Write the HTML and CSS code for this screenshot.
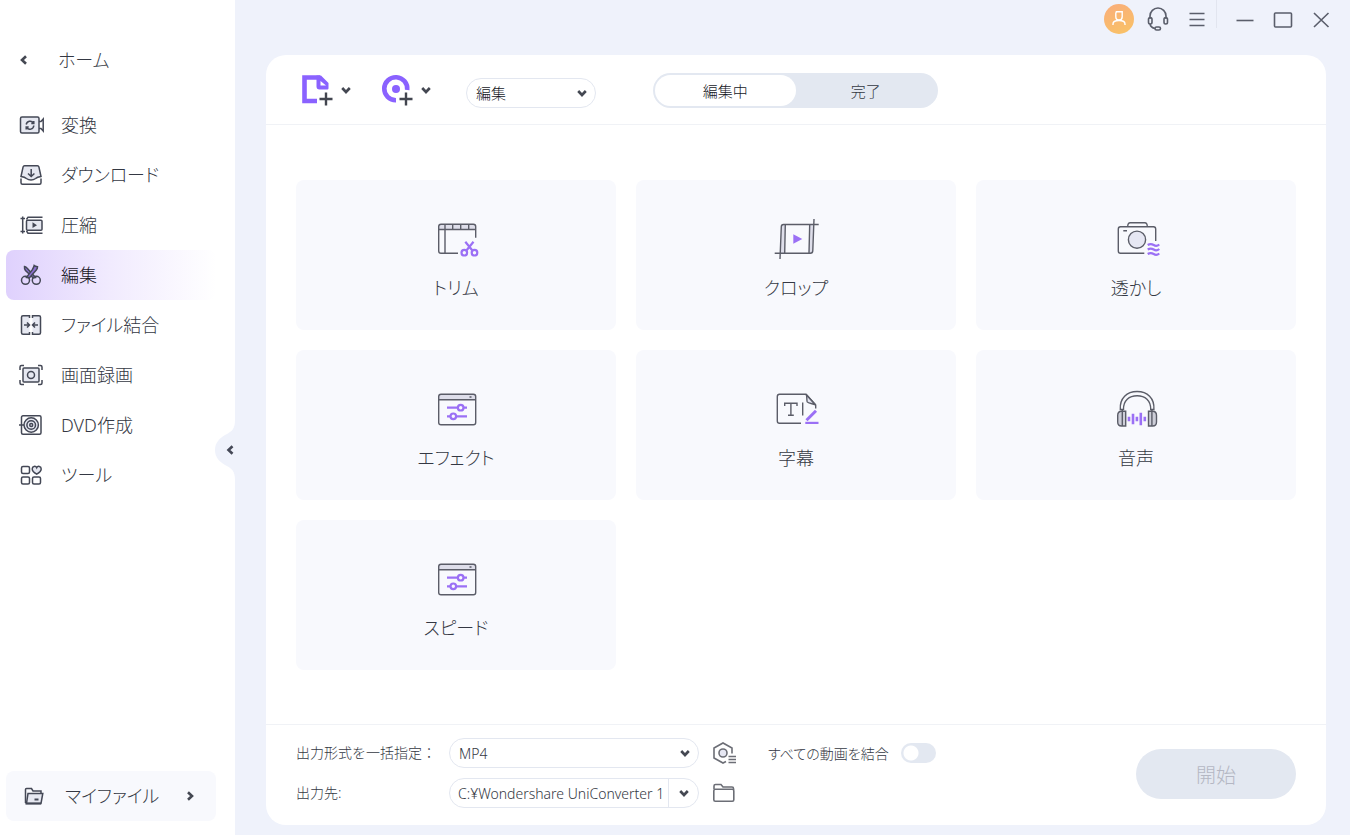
FILE: index.html
```html
<!DOCTYPE html>
<html lang="ja">
<head>
<meta charset="utf-8">
<meta name="viewport" content="width=device-width, initial-scale=1">
<title>UniConverter</title>
<link rel="stylesheet" href="styles.css">
</head>
<body>
<div class="app">
  <aside class="sidebar">
    <a class="back" href="#home">
      <svg class="chevron" viewBox="0 0 12 12"><path d="M8 2.200 4 6l4 3.800"/></svg>
      <span>ホーム</span>
    </a>
    <nav class="nav">
      <a class="nav-item" href="#convert">
        <svg class="nav-icon" viewBox="0 0 28 24"><rect class="tint" x="3.500" y="4" width="18.500" height="16" rx="1.500"/><path d="M22 8.500h2L26.200 6v12L24 15.500h-2"/><path d="M9.200 11.500a4 4 0 0 1 7.300-1.500M16.800 12.500a4 4 0 0 1-7.300 2M16.800 8v2.500h-2.500M9.200 16.500V14h2.500"/></svg>
        <span>変換</span>
      </a>
      <a class="nav-item" href="#download">
        <svg class="nav-icon" viewBox="0 0 28 24"><path class="tint" d="M7.500 2.800h13c.8 0 1.200.4 1.400 1.100l2.100 9.600c-2 .3-4 .7-5.400 2-1.400 1-2.600 1.500-4.600 1.500s-3.200-.5-4.600-1.500c-1.400-1.300-3.400-1.700-5.400-2L6.100 3.900c.2-.7.600-1.100 1.400-1.100Z"/><path d="M4 15.500v4.200c0 1 .5 1.500 1.500 1.500h17c1 0 1.500-.5 1.500-1.500v-4.200M14.200 6v7.500M11 10.500l3.200 3 3.200-3"/></svg>
        <span>ダウンロード</span>
      </a>
      <a class="nav-item" href="#compress">
        <svg class="nav-icon" viewBox="0 0 28 24"><path d="M5.700 3.500v17M3.500 5.500h4.500M3.500 18.500h4.500M9.500 6.500l1.500-2.300h14.500M9.500 18l1.500 2.200h14.500"/><rect class="tint" x="9.500" y="7.200" width="15.500" height="10" rx="1"/><path class="solid" d="m15.500 9.300 4.500 2.900-4.500 2.900Z"/></svg>
        <span>圧縮</span>
      </a>
      <a class="nav-item nav-item-active" href="#edit" aria-current="page">
        <svg class="nav-icon" viewBox="0 0 28 24"><path class="blade" d="M7.500 3.500c1.200.2 2 .8 2.700 1.700l8.300 9.300-2.300.5-7.700-7.500C7.700 6.400 7.300 5 7.500 3.500Z"/><path class="blade" d="M17.200 2.500c.8.800 1.700 1 3.300 1.200.1 1.300-.4 2.300-1.200 3.200l-7 8-2.800-.5 5.700-7.500c1-1.500 1.600-2.900 2-4.400Z"/><circle cx="8.500" cy="17.300" r="4"/><circle cx="19.300" cy="17.300" r="4"/></svg>
        <span>編集</span>
      </a>
      <a class="nav-item" href="#merge">
        <svg class="nav-icon" viewBox="0 0 28 24"><path class="tint" d="M12.500 5V2.800H6C5 2.800 4.500 3.300 4.500 4.300v15.400c0 1 .5 1.500 1.500 1.500h6.500V19M15.500 5V2.800H22c1 0 1.500.5 1.500 1.500v15.400c0 1-.5 1.500-1.500 1.500h-6.500V19"/><path d="M7 12h5M10 9.500l2.500 2.500-2.500 2.500M21 12h-5M18 9.500 15.500 12l2.500 2.500"/></svg>
        <span>ファイル結合</span>
      </a>
      <a class="nav-item" href="#record">
        <svg class="nav-icon" viewBox="0 0 28 24"><path d="M3 7V4c0-1 .5-1.500 1.500-1.500H7M21 2.500h2.500C24.500 2.500 25 3 25 4v3M25 17v3c0 1-.5 1.500-1.500 1.500H21M7 21.500H4.500C3.500 21.500 3 21 3 20v-3"/><rect class="tint" x="6" y="5" width="16" height="14" rx="1"/><circle cx="14" cy="12" r="3.500"/></svg>
        <span>画面録画</span>
      </a>
      <a class="nav-item" href="#dvd">
        <svg class="nav-icon" viewBox="0 0 28 24"><rect x="4.500" y="2.800" width="19.500" height="18.500" rx="1.500"/><circle class="tint" cx="14.200" cy="12" r="7.200"/><circle cx="14.200" cy="12" r="4.300"/><circle cx="14.200" cy="12" r="1.500"/><path d="M2 12h5"/></svg>
        <span>DVD作成</span>
      </a>
      <a class="nav-item" href="#tools">
        <svg class="nav-icon" viewBox="0 0 28 24"><rect x="4.500" y="3.500" width="8" height="7" rx="1.500"/><path class="tint" d="M19.700 11.200c-2.500-1.500-4.500-3.300-4.500-5.200 0-3 3.500-3.500 4.500-1.300 1-2.200 4.500-1.700 4.500 1.300 0 1.900-2 3.700-4.500 5.200Z"/><rect x="4.500" y="14" width="8" height="7" rx="1.500"/><rect x="15.500" y="14" width="8" height="7" rx="1.500"/></svg>
        <span>ツール</span>
      </a>
    </nav>
    <a class="my-files" href="#files">
      <svg class="nav-icon" viewBox="0 0 28 24"><path d="M5.500 19V5.500c0-.7.300-1 1-1h5l1.500 2.500h8v2.500"/><path class="tint" d="M6.500 19.500h14.500l1.800-10H8L6.500 19.500Z"/><path d="M5.500 19.500h15.500M14.500 15.500h4" stroke-width="2"/></svg>
      <span>マイファイル</span>
      <svg class="chevron my-files-arrow" viewBox="0 0 12 12"><path d="m4 2.200 4 3.800-4 3.800"/></svg>
    </a>
    <button class="collapse" type="button" aria-label="サイドバーを閉じる">
      <svg viewBox="0 0 20 60"><path class="collapse-tab" d="M20 0c0 9-3 11-8 14C4 18 0 23 0 30s4 12 12 16c5 3 8 5 8 14Z"/><path class="collapse-mark" d="m17.500 26.200-4 3.800 4 3.800"/></svg>
    </button>
  </aside>

  <main class="main">
    <header class="titlebar">
      <div class="tools">
        <button class="avatar" type="button" aria-label="アカウント">
          <svg viewBox="0 0 30 30"><path d="M11.800 7.800h6.400v5a3.200 3.200 0 0 1-6.400 0v-3.500c0-.9.500-1.500 1.500-1.500ZM9 21v-1c0-2 1.500-3.500 6-3.500s6 1.500 6 3.500v1"/></svg>
        </button>
        <button class="tool" type="button" aria-label="サポート">
          <svg viewBox="0 0 30 30"><path d="M7 15V12a8 8 0 0 1 16 0v3"/><rect x="5.500" y="13.500" width="3.500" height="6.500" rx="1.700"/><rect x="21" y="13.500" width="3.500" height="6.500" rx="1.700"/><path d="M7 20c.5 2.500 2.500 4 5 4.500"/><rect x="12" y="23" width="5.500" height="3" rx="1.500"/></svg>
        </button>
        <button class="tool" type="button" aria-label="メニュー">
          <svg viewBox="0 0 30 30"><path d="M7.500 9.500h15M7.500 15.500h15M7.500 21.500h15"/></svg>
        </button>
      </div>
      <div class="window-controls">
        <button class="tool" type="button" aria-label="最小化"><svg viewBox="0 0 30 30"><path d="M6.500 16.500h17"/></svg></button>
        <button class="tool" type="button" aria-label="最大化"><svg viewBox="0 0 30 30"><rect x="6.500" y="9" width="17" height="14" rx="1"/></svg></button>
        <button class="tool" type="button" aria-label="閉じる"><svg viewBox="0 0 30 30"><path d="m8 9 14.500 14M22.500 9 8 23"/></svg></button>
      </div>
    </header>

    <section class="panel">
      <div class="toolbar">
        <div class="add-buttons">
          <button class="add" type="button" aria-label="ファイルを追加">
            <svg class="add-icon" viewBox="0 0 32 32"><path class="brand" d="M16 27H3.500V3.500H19"/><path class="brand-fill" d="M15.500 1.500H20l7.500 7.500v5c0 1-.5 1.500-1.500 1.500h-7.500c-2 0-3-1-3-3Zm4 5.500v4.500H25Z"/><path class="plus" d="M25 18.500v13M18.500 25h13"/></svg>
            <svg class="chevron" viewBox="0 0 12 12"><path d="M2.200 4 6 8l3.800-4"/></svg>
          </button>
          <button class="add" type="button" aria-label="DVDを追加">
            <svg class="add-icon" viewBox="0 0 32 32"><path class="brand" d="M15 26.200A11.500 11.500 0 1 1 26.200 16"/><circle class="brand-fill" cx="15" cy="15" r="4"/><path class="plus" d="M25 18.500v13M18.500 25h13"/></svg>
            <svg class="chevron" viewBox="0 0 12 12"><path d="M2.200 4 6 8l3.800-4"/></svg>
          </button>
        </div>
        <div class="select select-mode">
          <select aria-label="機能"><option>編集</option></select>
          <svg class="chevron" viewBox="0 0 12 12"><path d="M2.200 4 6 8l3.800-4"/></svg>
        </div>
        <div class="segment" role="tablist">
          <button class="tab tab-active" type="button" role="tab" aria-selected="true">編集中</button>
          <button class="tab" type="button" role="tab" aria-selected="false">完了</button>
        </div>
      </div>

      <div class="cards">
        <button class="card" type="button">
          <svg class="card-icon" viewBox="0 0 48 44"><path class="shade" d="M7 6.500h36.500v5H7Z"/><path d="M26 35.300H9c-1.500 0-2.300-.8-2.300-2.300V8.600c0-1.500.8-2.300 2.300-2.300h32.400c1.500 0 2.300.8 2.300 2.300v11.100M6.700 11.500h37M13 6.300v29M20.700 6.300v5M28.700 6.300v5M36.700 6.300v5"/><path class="accent" d="m33.300 23.700 6.900 8.500M41.500 23.700l-6.900 8.500"/><circle class="accent" cx="32.300" cy="34.700" r="2.800"/><circle class="accent" cx="42.500" cy="34.700" r="2.800"/></svg>
          <span>トリム</span>
        </button>
        <button class="card" type="button">
          <svg class="card-icon" viewBox="0 0 48 44"><path class="shade" d="M9.300 7h4l-.6 28H8.300ZM37.300 7h4l-.6 28h-4Z"/><path d="M46.700 6.500H11.500c-1.500 0-2.200.8-2.200 2.300L8 41M42 1l-1.200 31.500c0 1.800-.8 2.800-2.500 2.800H2.700M13.300 6.500l-.6 28.800M37.700 6.500l-.7 28.800"/><path class="accent-fill" d="m21.300 16.300 9 4.700-9 4.700Z"/></svg>
          <span>クロップ</span>
        </button>
        <button class="card" type="button">
          <svg class="card-icon" viewBox="0 0 48 44"><path d="M32.300 35.300H8.500c-1.500 0-2.200-.8-2.200-2.300V11c0-1.500.7-2.300 2.200-2.300h33c1.500 0 2.200.8 2.200 2.300v12M15.700 8.700c0-2.700.7-4 2.500-4h14.600c1.800 0 2.500 1.300 2.500 4M11.300 12.700H15"/><circle class="shade-line" cx="25" cy="21.700" r="8.600"/><path class="accent" d="M35.700 27c2-1.300 4-1.300 6 0s3.800 1 5.600-.5M35.700 31.500c2-1.300 4-1.300 6 0s3.800 1 5.600-.5M35.700 36c2-1.300 4-1.300 6 0s3.800 1 5.600-.5"/></svg>
          <span>透かし</span>
        </button>
        <button class="card" type="button">
          <svg class="card-icon" viewBox="0 0 48 44"><path class="shade" d="M7 6.500h36.500v5H7Z"/><rect x="6.700" y="6.300" width="37" height="30.400" rx="2.300"/><path d="M6.700 11.700h37M37.500 9h2"/><path class="accent" d="M15 19.700h10.700M31.700 19.700H35M15 28.300h3.300M24.300 28.300H35"/><circle class="accent" cx="28.700" cy="19.700" r="2.800"/><circle class="accent" cx="21.300" cy="28.300" r="2.800"/></svg>
          <span>エフェクト</span>
        </button>
        <button class="card" type="button">
          <svg class="card-icon" viewBox="0 0 48 44"><path class="shade-line" d="M34 6.300c1.500 2 .3 4.500 1.200 7.500 1.500 2 5.500 1.200 8.500 3.200Z"/><path d="M29 35.300H7.500c-1.500 0-2.200-.8-2.200-2.300V8.600c0-1.500.7-2.300 2.200-2.300H34L43.700 17v3.500"/><path d="M12.700 18v-2.700H25V18M18.900 15.300V27M16 27.300h5.800M30.700 14.500v13"/><path class="accent accent-wide" d="m44 22.700-9.500 9.500"/><path class="accent" d="M33.300 34.900H46.500"/></svg>
          <span>字幕</span>
        </button>
        <button class="card" type="button">
          <svg class="card-icon" viewBox="0 0 48 44"><path d="M8.300 21.500C7.500 10 15 3.500 25.100 3.500S42.700 10 41.900 21.500h-3.200C39 12.500 33 7.700 25.100 7.700S11.200 12.500 11.500 21.500Z"/><path class="shade-dark" d="M13.700 23.300H9.500c-2.500 0-3.800 1.700-3.800 4.200V34c0 2.500 1.300 4 3.800 4h4.200ZM36.500 23.300h4.200c2.500 0 3.800 1.700 3.800 4.200V34c0 2.500-1.300 4-3.800 4h-4.200Z"/><path d="M10.300 21.500V38M39.900 21.500V38"/><path class="accent bars" d="M17 28.700v4.600M21 25.700v10.600M24.900 28.700v4.600M28.800 24.700v12.600M32.800 28.700v4.600"/></svg>
          <span>音声</span>
        </button>
        <button class="card" type="button">
          <svg class="card-icon" viewBox="0 0 48 44"><path class="shade" d="M7 6.500h36.500v5H7Z"/><rect x="6.700" y="6.300" width="37" height="30.400" rx="2.300"/><path d="M6.700 11.700h37M37.500 9h2"/><path class="accent" d="M15 19.700h10.700M31.700 19.700H35M15 28.300h3.300M24.300 28.300H35"/><circle class="accent" cx="28.700" cy="19.700" r="2.800"/><circle class="accent" cx="21.300" cy="28.300" r="2.800"/></svg>
          <span>スピード</span>
        </button>
      </div>

      <footer class="output">
        <div class="output-form">
          <label class="field-label" for="format">出力形式を一括指定：</label>
          <div class="select">
            <select id="format"><option>MP4</option></select>
            <svg class="chevron" viewBox="0 0 12 12"><path d="M2.200 4 6 8l3.800-4"/></svg>
          </div>
          <button class="icon-button" type="button" aria-label="出力設定">
            <svg viewBox="0 0 24 24"><path d="M14 20.500 11 22l-9-5V7l9-5 9 5v5.500"/><circle class="shade-line" cx="11" cy="12" r="4"/><path d="M16.500 15.500H24M16.500 18.500H24M16.500 21.500H24"/></svg>
          </button>
          <label class="field-label" for="path">出力先:</label>
          <div class="path">
            <input id="path" type="text" value="C:¥Wondershare UniConverter 1" readonly>
            <button class="path-toggle" type="button" aria-label="出力先を選択">
              <svg class="chevron" viewBox="0 0 12 12"><path d="M2.200 4 6 8l3.800-4"/></svg>
            </button>
          </div>
          <button class="icon-button" type="button" aria-label="フォルダを開く">
            <svg viewBox="0 0 24 24"><path d="M2 8V5c0-1 .5-1.500 1.500-1.500H9L11 6h9c1 0 1.500.5 1.500 1.500V9"/><rect x="1.800" y="8.300" width="20" height="12" rx="1.500"/></svg>
          </button>
        </div>
        <div class="merge">
          <label class="merge-label" for="merge">すべての動画を結合</label>
          <input class="switch" id="merge" type="checkbox" role="switch">
        </div>
        <button class="start" type="button" disabled>開始</button>
      </footer>
    </section>
  </main>
</div>
</body>
</html>
```

FILE: styles.css
```css
:root {
  --ink: #444856;
  --text: #343843;
  --canvas: #eff2fb;
  --tile: #f8f9fd;
  --muted: #e3e8f1;
  --line: #e3e7f0;
  --purple: #9b70f5;
}

* { box-sizing: border-box; }

body {
  margin: 0;
  background: var(--canvas);
  color: var(--text);
  font-family: "Noto Sans", "Noto Sans CJK JP", sans-serif;
  font-size: 14px;
  font-weight: 300;
}

button, input, select {
  margin: 0;
  padding: 0;
  border: 0;
  background: none;
  color: inherit;
  font: inherit;
}

a { color: inherit; text-decoration: none; }

svg {
  display: block;
  flex: none;
  fill: none;
  stroke: var(--ink);
  stroke-width: 1.4;
}

.chevron {
  width: 12px;
  height: 12px;
  stroke: #444852;
  stroke-width: 2.6;
}

.app {
  display: grid;
  grid-template-columns: 235px minmax(0, 1fr);
  min-height: 100vh;
}

/* Sidebar */
.sidebar {
  position: relative;
  display: flex;
  flex-direction: column;
  padding: 40px 19px 14px 6px;
  background: #fff;
  font-size: 18px;
  font-feature-settings: "palt";
}

.back {
  display: flex;
  align-items: center;
  gap: 28px;
  height: 40px;
  padding-left: 12px;
}

.nav { margin-top: 20px; }

.nav-item {
  display: flex;
  align-items: center;
  gap: 16px;
  height: 50px;
  padding-left: 11px;
  border-radius: 8px;
}

.back span, .nav-item span, .my-files span { padding-bottom: 2px; }

.nav-item-active {
  background: linear-gradient(90deg, #dfd1fd, #f1ebfe 50%, #fff);
  color: #17151f;
}

.nav-icon {
  width: 28px;
  height: 24px;
  stroke-width: 1.5;
}

.tint { fill: #e6e8f1; }
.solid { fill: var(--ink); stroke: none; }
.blade { fill: #8b6fd0; }

.my-files {
  display: flex;
  align-items: center;
  gap: 17px;
  height: 50px;
  margin-top: auto;
  padding: 0 20px 0 14px;
  border-radius: 8px;
  background: var(--tile);
}

.my-files-arrow { margin-left: auto; }

.collapse {
  position: absolute;
  top: 420px;
  right: 0;
  width: 20px;
  height: 60px;
}

.collapse svg { width: 20px; height: 60px; }
.collapse-tab { fill: var(--canvas); stroke: none; }
.collapse-mark { stroke-width: 2.6; }

/* Window */
.main {
  display: flex;
  flex-direction: column;
  padding: 0 24px 10px 31px;
}

.titlebar {
  display: flex;
  justify-content: flex-end;
  align-items: flex-start;
  height: 55px;
  margin-right: -10px;
}

.tools {
  display: flex;
  gap: 9px;
  padding: 4px 4px 0 0;
}

.window-controls {
  display: flex;
  gap: 8px;
  padding: 4px 0 0 14px;
  background: linear-gradient(#e2e5ef, #e2e5ef) left top / 1px 28px no-repeat;
}

.tool, .avatar, .tool svg, .avatar svg { width: 30px; height: 30px; }
.tool svg { stroke: #5a5e6b; stroke-width: 1.6; }

.avatar {
  border-radius: 50%;
  background: linear-gradient(160deg, #f9ad7b, #f9c365);
}

.avatar svg { stroke: #fff; }

.panel {
  display: flex;
  flex: 1;
  flex-direction: column;
  border-radius: 20px;
  background: #fff;
}

.toolbar {
  display: flex;
  align-items: flex-end;
  height: 70px;
  padding: 0 35px 16px;
  border-bottom: 1px solid #f0f2f6;
}

.add-buttons {
  display: flex;
  gap: 29px;
  padding-bottom: 2px;
}

.add {
  display: flex;
  align-items: center;
  gap: 7px;
}

.add-icon { width: 32px; height: 32px; }
.brand { stroke: #8a62ff; stroke-width: 4.6; }
.brand-fill { fill: #8a62ff; fill-rule: evenodd; stroke: none; }
.plus { stroke: #42454f; stroke-width: 2.4; }

/* The chevron shares the grid cell of its select */
.select {
  display: grid;
  align-items: center;
  height: 30px;
}

.select > * { grid-area: 1 / 1; }

.select select {
  width: 100%;
  height: 30px;
  padding: 0 28px 0 9px;
  border: 1px solid var(--line);
  border-radius: 15px;
  appearance: none;
}

.select .chevron {
  justify-self: end;
  margin-right: 8px;
  pointer-events: none;
}

.select-mode {
  width: 130px;
  margin-left: 34px;
  color: #17191f;
  font-size: 15px;
}

.segment {
  display: grid;
  grid-template-columns: 1fr 1fr;
  width: 285px;
  height: 35px;
  margin-left: 57px;
  padding: 2px;
  border-radius: 18px;
  background: var(--muted);
  font-size: 15px;
}

.tab { border-radius: 16px; }
.tab-active { background: #fff; color: #17191f; }

.cards {
  display: grid;
  flex: 1;
  grid-template-columns: repeat(3, minmax(0, 1fr));
  align-content: start;
  gap: 20px;
  padding: 55px 30px 54px;
}

.card {
  display: flex;
  flex-direction: column;
  align-items: center;
  gap: 14px;
  height: 150px;
  padding-top: 38px;
  border-radius: 8px;
  background: var(--tile);
  font-size: 18px;
  font-feature-settings: "palt";
  line-height: 24px;
}

.card-icon {
  width: 48px;
  height: 44px;
  stroke: #5b5d68;
}

.shade { fill: #dedeea; stroke: none; }
.shade-line { fill: #e6e7f3; }
.shade-dark { fill: #cdced8; }
.accent { stroke: var(--purple); stroke-width: 2.2; }
.accent-wide { stroke-width: 3; }
.accent-fill { fill: var(--purple); stroke: none; }
.bars { stroke-width: 2.6; }

/* Output bar */
.output {
  display: flex;
  align-items: flex-start;
  min-height: 101px;
  padding: 13px 30px 16px;
  border-top: 1px solid #f0f2f6;
}

.output-form {
  display: grid;
  grid-template-columns: 153px 250px 24px;
  align-items: center;
  row-gap: 10px;
}

.field-label { padding-bottom: 2px; }

.output .icon-button { margin-left: 13px; }

.icon-button, .icon-button svg { width: 24px; height: 24px; }
.icon-button svg { stroke: #6c6e76; stroke-width: 1.6; }

.path {
  display: flex;
  height: 30px;
  border: 1px solid var(--line);
  border-radius: 15px;
}

.path input {
  flex: 1;
  min-width: 0;
  padding-left: 8px;
}

.path-toggle {
  display: grid;
  place-items: center;
  width: 30px;
  border-left: 1px solid var(--line);
}

.merge {
  display: flex;
  align-items: center;
  gap: 12px;
  height: 30px;
  margin-left: 45px;
}

.merge-label { font-feature-settings: "palt"; }

.switch {
  width: 35px;
  height: 20px;
  border-radius: 10px;
  background: radial-gradient(circle at 10px 10px, #fff 7px, transparent 8px) var(--muted);
  appearance: none;
}

.switch:checked {
  background: radial-gradient(circle at 25px 10px, #fff 7px, transparent 8px) var(--purple);
}

.start {
  width: 160px;
  height: 50px;
  margin: 11px 0 0 auto;
  border-radius: 25px;
  background: var(--muted);
  color: #b4b7c3;
  font-size: 20px;
}
```
